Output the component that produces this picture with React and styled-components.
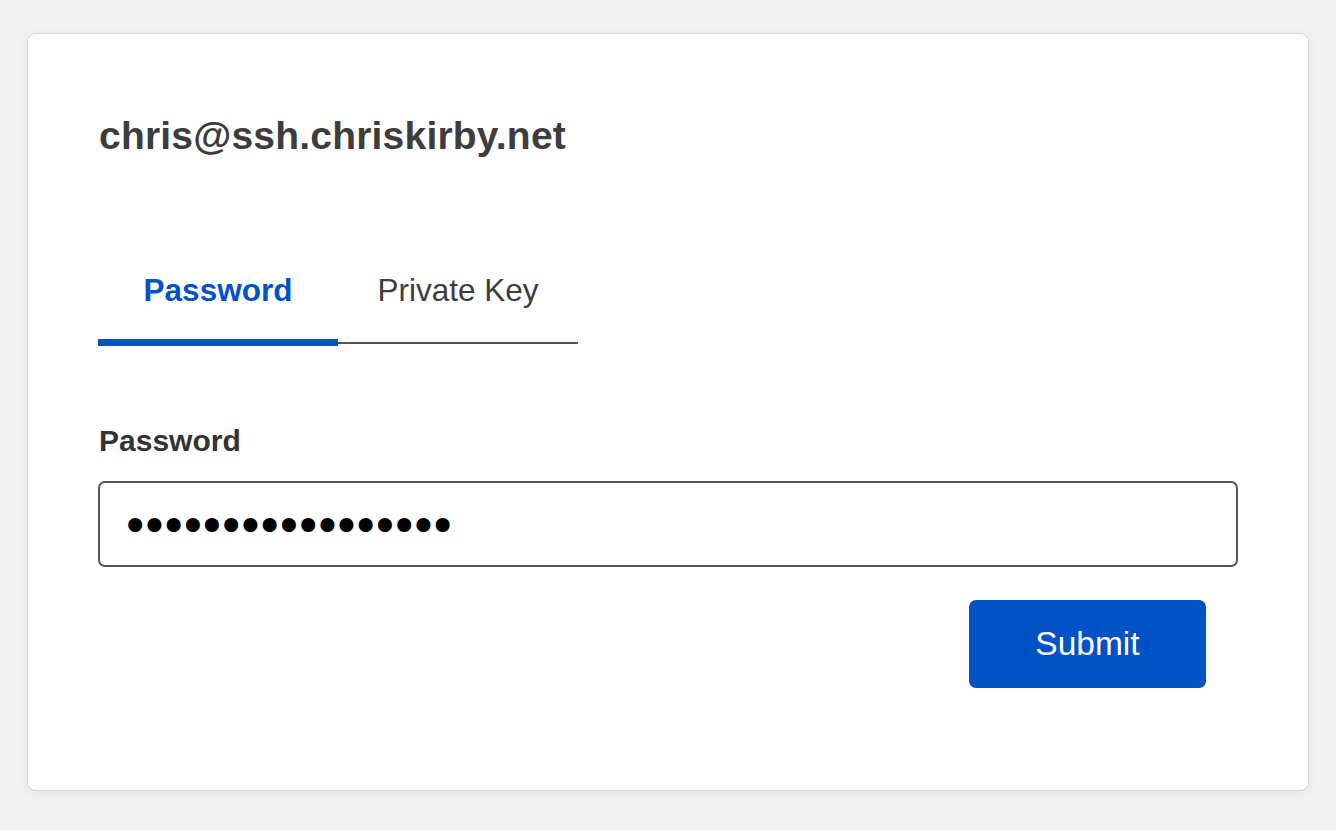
import React, { useState } from 'react';
import styled, { createGlobalStyle } from 'styled-components';

const GlobalStyle = createGlobalStyle`
  html, body {
    margin: 0;
    padding: 0;
    background: #f2f2f2;
    font-family: "Liberation Sans", Arial, sans-serif;
  }
`;

const Page = styled.div`
  padding: 33px 27px 38px;
`;

const Card = styled.div`
  background: #fff;
  border: 1px solid #d6d6d6;
  border-radius: 9px;
  box-shadow: 0 2px 10px rgba(0, 0, 0, 0.06);
  padding: 82px 70px 102px;
`;

const Host = styled.h1`
  margin: 0 0 116px 1px;
  font-size: 39px;
  line-height: 40px;
  font-weight: 700;
  color: #3d3d3d;
  letter-spacing: 0.2px;
`;

const TabList = styled.div`
  display: flex;
  margin-bottom: 80px;
`;

const Tab = styled.button`
  position: relative;
  width: 240px;
  padding: 0 0 34px;
  border: none;
  border-bottom: 2px solid #555;
  background: none;
  font-family: inherit;
  font-size: 31.5px;
  line-height: 36px;
  font-weight: ${p => (p.$active ? 700 : 400)};
  color: ${p => (p.$active ? '#0052c6' : '#3d3d3d')};
  cursor: pointer;

  &::after {
    content: '';
    display: ${p => (p.$active ? 'block' : 'none')};
    position: absolute;
    left: 0;
    right: 0;
    bottom: -4px;
    height: 7px;
    background: #0052c6;
  }
`;

const Label = styled.label`
  display: block;
  margin: 0 0 23px 1px;
  font-size: 30px;
  line-height: 34px;
  font-weight: 700;
  color: #333;
`;

const Input = styled.input`
  display: block;
  box-sizing: border-box;
  width: 100%;
  height: 86px;
  margin: 0 0 33px;
  padding: 3px 21px 0;
  border: 2px solid #555;
  border-radius: 7px;
  font-family: "DejaVu Sans", sans-serif;
  font-size: 48px;
  letter-spacing: -9.1px;
  color: #000;
  outline: none;
`;

const Actions = styled.div`
  display: flex;
  justify-content: flex-end;
  padding-right: 32px;
`;

const Submit = styled.button`
  width: 237px;
  height: 88px;
  border: none;
  border-radius: 7px;
  background: #0052c6;
  color: #fff;
  font-family: inherit;
  font-size: 33.5px;
  cursor: pointer;
`;

export default function App() {
  const [tab, setTab] = useState('password');
  return (
    <Page>
      <GlobalStyle />
      <Card>
        <Host>chris@ssh.chriskirby.net</Host>
        <TabList>
          <Tab $active={tab === 'password'} onClick={() => setTab('password')}>Password</Tab>
          <Tab $active={tab === 'key'} onClick={() => setTab('key')}>Private Key</Tab>
        </TabList>
        <Label htmlFor="pw">Password</Label>
        <Input id="pw" type="password" defaultValue="supersecretpasswd" />
        <Actions>
          <Submit>Submit</Submit>
        </Actions>
      </Card>
    </Page>
  );
}
